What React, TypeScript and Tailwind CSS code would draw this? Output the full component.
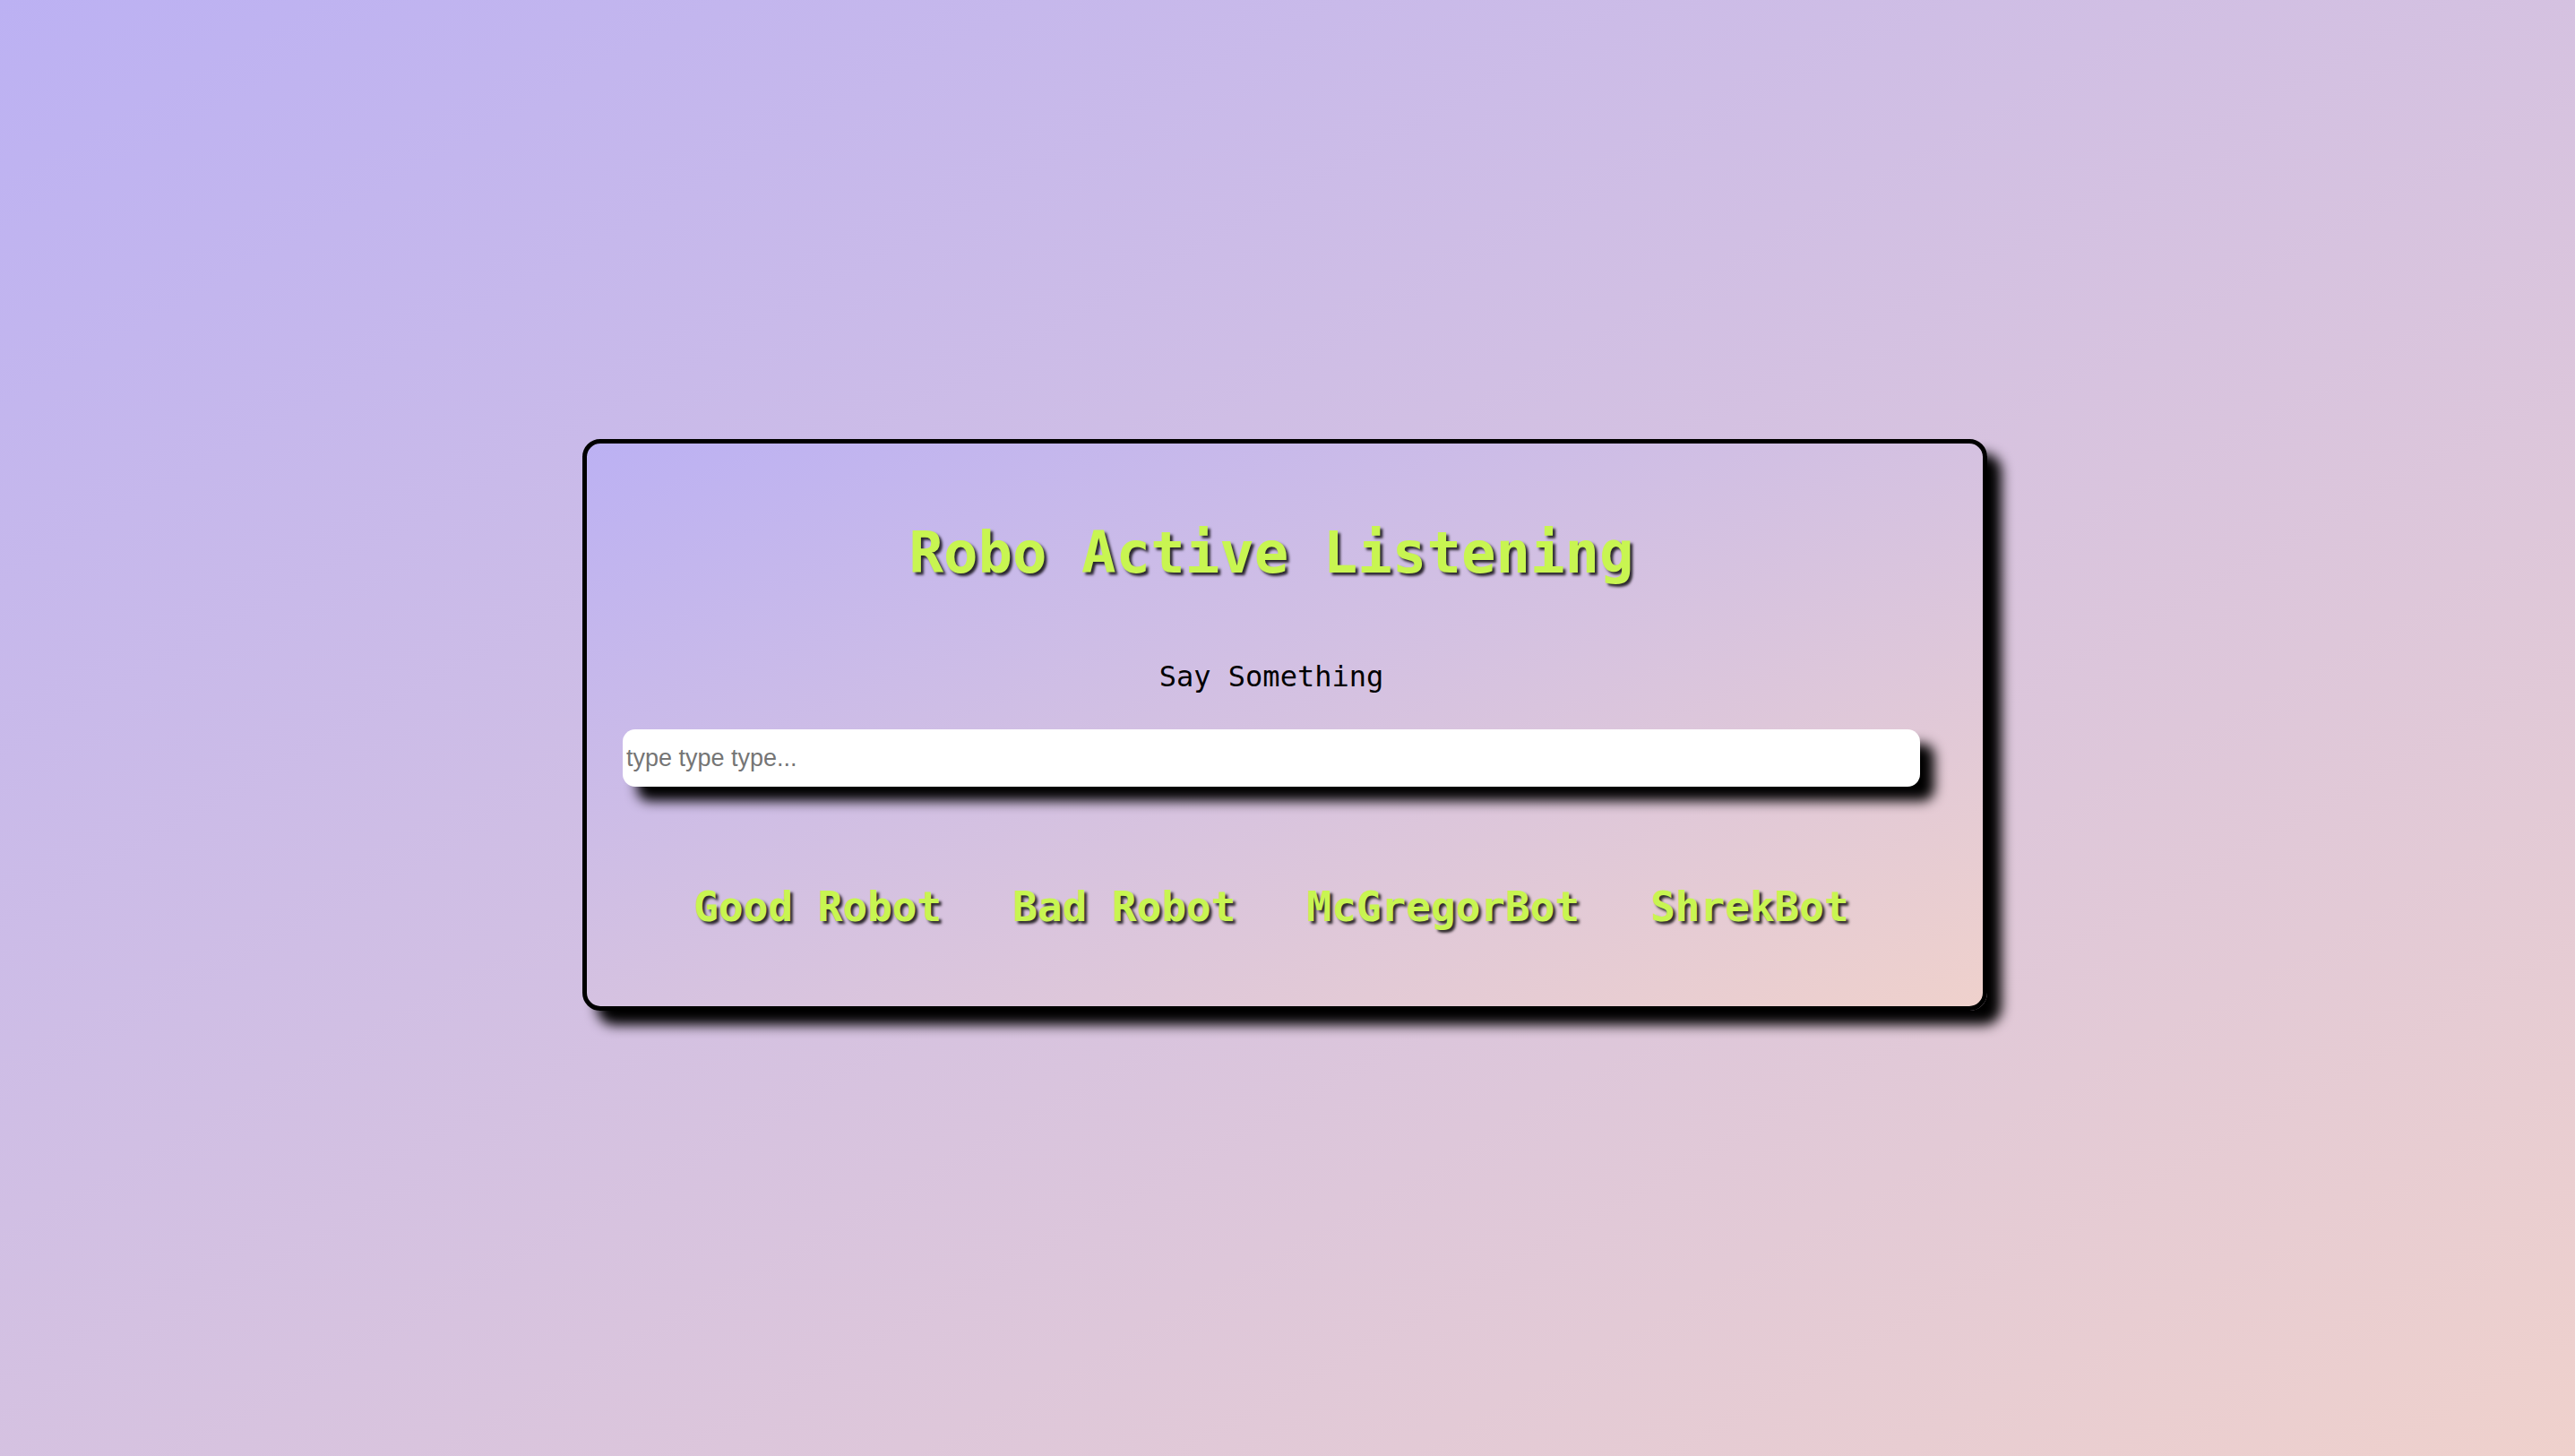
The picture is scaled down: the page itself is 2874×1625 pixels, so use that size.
import React, { useState } from "react";

const bots = ["Good Robot", "Bad Robot", "McGregorBot", "ShrekBot"];

function App() {
  const [text, setText] = useState<string>("");

  return (
    <div className="min-h-screen w-full flex items-center justify-center pr-[6px] pb-[7px] bg-linear-to-br from-[#bcb1f3] to-[#efd1cc] font-['DejaVu_Sans_Mono',monospace]">
      <div className="w-[1568px] border-[5px] border-black rounded-[20px] bg-linear-to-br from-[#bcb1f3] to-[#efd1cc] pl-10 pr-[70px] pt-[90px] pb-[88px] shadow-[16px_16px_14px_#000000]">
        <h1 className="text-center text-[64px] leading-none font-bold text-[#c8f551] [text-shadow:3px_3px_3px_rgba(0,0,0,0.8)]">
          Robo Active Listening
        </h1>
        <p className="mt-[90px] text-center text-[32px] leading-none text-black">
          Say Something
        </p>
        <input
          className="mt-[43px] block w-full h-16 rounded-[14px] bg-white pl-1 text-[27px] font-['Liberation_Sans',Arial,sans-serif] text-black placeholder:text-[#757575] outline-none shadow-[16px_16px_14px_#000000]"
          placeholder="type type type..."
          value={text}
          onChange={(e) => setText(e.target.value)}
        />
        <div className="mt-[111px] flex justify-center gap-[79px]">
          {bots.map((bot) => (
            <button
              key={bot}
              type="button"
              className="text-[46px] leading-none font-bold text-[#c8f551] [text-shadow:3px_3px_3px_rgba(0,0,0,0.8)]"
            >
              {bot}
            </button>
          ))}
        </div>
      </div>
    </div>
  );
}

export default App;
